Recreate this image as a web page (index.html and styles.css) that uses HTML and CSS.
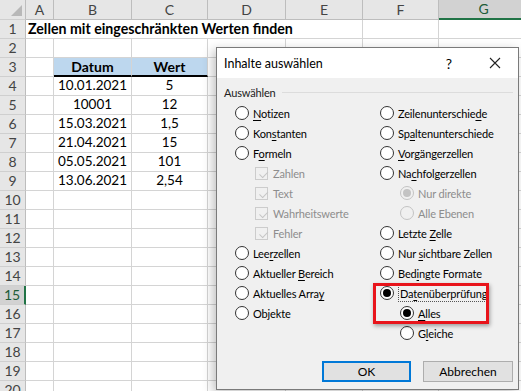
FILE: index.html
```html
<!DOCTYPE html>
<html lang="de">
<head>
    <meta charset="UTF-8">
    <title>Inhalte auswählen</title>
    <link rel="stylesheet" href="styles.css">
</head>
<body>

    <div class="sheet">
        <div class="row head">
            <div class="cell rh corner"><span class="tri"></span></div>
            <div class="cell">A</div>
            <div class="cell">B</div>
            <div class="cell">C</div>
            <div class="cell">D</div>
            <div class="cell">E</div>
            <div class="cell">F</div>
            <div class="cell sel">G</div>
        </div>
        <div class="row">
            <div class="cell rh">1</div>
            <div class="cell title">Zellen mit eingeschränkten Werten finden</div>
            <div class="cell"></div>
            <div class="cell"></div>
        </div>
        <div class="row">
            <div class="cell rh">2</div>
            <div class="cell"></div><div class="cell"></div><div class="cell"></div><div class="cell"></div><div class="cell"></div><div class="cell"></div><div class="cell"></div>
        </div>
        <div class="row">
            <div class="cell rh">3</div>
            <div class="cell"></div>
            <div class="cell th">Datum</div>
            <div class="cell th">Wert</div>
            <div class="cell"></div><div class="cell"></div><div class="cell"></div><div class="cell"></div>
        </div>
        <div class="row">
            <div class="cell rh">4</div>
            <div class="cell"></div>
            <div class="cell val">10.01.2021</div>
            <div class="cell val">5</div>
            <div class="cell"></div><div class="cell"></div><div class="cell"></div><div class="cell"></div>
        </div>
        <div class="row">
            <div class="cell rh">5</div>
            <div class="cell"></div>
            <div class="cell val">10001</div>
            <div class="cell val">12</div>
            <div class="cell"></div><div class="cell"></div><div class="cell"></div><div class="cell"></div>
        </div>
        <div class="row">
            <div class="cell rh">6</div>
            <div class="cell"></div>
            <div class="cell val">15.03.2021</div>
            <div class="cell val">1,5</div>
            <div class="cell"></div><div class="cell"></div><div class="cell"></div><div class="cell"></div>
        </div>
        <div class="row">
            <div class="cell rh">7</div>
            <div class="cell"></div>
            <div class="cell val">21.04.2021</div>
            <div class="cell val">15</div>
            <div class="cell"></div><div class="cell"></div><div class="cell"></div><div class="cell"></div>
        </div>
        <div class="row">
            <div class="cell rh">8</div>
            <div class="cell"></div>
            <div class="cell val">05.05.2021</div>
            <div class="cell val">101</div>
            <div class="cell"></div><div class="cell"></div><div class="cell"></div><div class="cell"></div>
        </div>
        <div class="row">
            <div class="cell rh">9</div>
            <div class="cell"></div>
            <div class="cell val">13.06.2021</div>
            <div class="cell val">2,54</div>
            <div class="cell"></div><div class="cell"></div><div class="cell"></div><div class="cell"></div>
        </div>
        <div class="row"><div class="cell rh">10</div><div class="cell"></div><div class="cell"></div><div class="cell"></div><div class="cell"></div><div class="cell"></div><div class="cell"></div><div class="cell"></div></div>
        <div class="row"><div class="cell rh">11</div><div class="cell"></div><div class="cell"></div><div class="cell"></div><div class="cell"></div><div class="cell"></div><div class="cell"></div><div class="cell"></div></div>
        <div class="row"><div class="cell rh">12</div><div class="cell"></div><div class="cell"></div><div class="cell"></div><div class="cell"></div><div class="cell"></div><div class="cell"></div><div class="cell"></div></div>
        <div class="row"><div class="cell rh">13</div><div class="cell"></div><div class="cell"></div><div class="cell"></div><div class="cell"></div><div class="cell"></div><div class="cell"></div><div class="cell"></div></div>
        <div class="row"><div class="cell rh">14</div><div class="cell"></div><div class="cell"></div><div class="cell"></div><div class="cell"></div><div class="cell"></div><div class="cell"></div><div class="cell"></div></div>
        <div class="row"><div class="cell rh sel">15</div><div class="cell"></div><div class="cell"></div><div class="cell"></div><div class="cell"></div><div class="cell"></div><div class="cell"></div><div class="cell"></div></div>
        <div class="row"><div class="cell rh">16</div><div class="cell"></div><div class="cell"></div><div class="cell"></div><div class="cell"></div><div class="cell"></div><div class="cell"></div><div class="cell"></div></div>
        <div class="row"><div class="cell rh">17</div><div class="cell"></div><div class="cell"></div><div class="cell"></div><div class="cell"></div><div class="cell"></div><div class="cell"></div><div class="cell"></div></div>
        <div class="row"><div class="cell rh">18</div><div class="cell"></div><div class="cell"></div><div class="cell"></div><div class="cell"></div><div class="cell"></div><div class="cell"></div><div class="cell"></div></div>
        <div class="row"><div class="cell rh">19</div><div class="cell"></div><div class="cell"></div><div class="cell"></div><div class="cell"></div><div class="cell"></div><div class="cell"></div><div class="cell"></div></div>
        <div class="row"><div class="cell rh">20</div><div class="cell"></div><div class="cell"></div><div class="cell"></div><div class="cell"></div><div class="cell"></div><div class="cell"></div><div class="cell"></div></div>

        <!-- Inhalte auswählen dialog -->
        <div class="dialog">
            <div class="dlg-title">
                <span class="dlg-name">Inhalte auswählen</span>
                <span class="dlg-help">?</span>
                <svg class="dlg-close" width="12" height="12" viewBox="0 0 12 12">
                    <path d="M1 1 L11 11 M11 1 L1 11" stroke="#222" stroke-width="1.1" fill="none"/>
                </svg>
            </div>
            <div class="dlg-body">
                <div class="group-label"><span>Auswählen</span></div>
                <div class="options">
                    <div class="col">
                        <div class="opt"><span class="radio"></span><span><u>N</u>otizen</span></div>
                        <div class="opt"><span class="radio"></span><span>Kon<u>s</u>tanten</span></div>
                        <div class="opt"><span class="radio"></span><span>F<u>o</u>rmeln</span></div>
                        <div class="opt sub off"><span class="check"></span><span>Zahlen</span></div>
                        <div class="opt sub off"><span class="check"></span><span>Text</span></div>
                        <div class="opt sub off"><span class="check"></span><span>Wahrheitswerte</span></div>
                        <div class="opt sub off"><span class="check"></span><span>Fehler</span></div>
                        <div class="opt"><span class="radio"></span><span>Lee<u>r</u>zellen</span></div>
                        <div class="opt"><span class="radio"></span><span>Aktueller <u>B</u>ereich</span></div>
                        <div class="opt"><span class="radio"></span><span>Aktuelles Arra<u>y</u></span></div>
                        <div class="opt"><span class="radio"></span><span>Objekte</span></div>
                    </div>
                    <div class="col">
                        <div class="opt"><span class="radio"></span><span>Zeilenunterschie<u>d</u>e</span></div>
                        <div class="opt"><span class="radio"></span><span>Sp<u>a</u>ltenunterschiede</span></div>
                        <div class="opt"><span class="radio"></span><span><u>V</u>orgängerzellen</span></div>
                        <div class="opt"><span class="radio"></span><span>Na<u>c</u>hfolgerzellen</span></div>
                        <div class="opt sub off"><span class="radio on"></span><span>Nur direkte</span></div>
                        <div class="opt sub off"><span class="radio"></span><span>Alle Ebenen</span></div>
                        <div class="opt"><span class="radio"></span><span>Letzte <u>Z</u>elle</span></div>
                        <div class="opt"><span class="radio"></span><span>Nur <u>s</u>ichtbare Zellen</span></div>
                        <div class="opt"><span class="radio"></span><span>Bed<u>i</u>ngte Formate</span></div>
                        <div class="opt"><span class="radio on"></span><span class="focus">Da<u>t</u>enüberprüfung</span></div>
                        <div class="opt sub"><span class="radio on"></span><span><u>A</u>lles</span></div>
                        <div class="opt sub"><span class="radio"></span><span>G<u>l</u>eiche</span></div>
                    </div>
                </div>
                <div class="buttons">
                    <button class="btn default">OK</button>
                    <button class="btn">Abbrechen</button>
                </div>
            </div>
            <div class="highlight"></div>
        </div>
    </div>

</body>
</html>
```

FILE: styles.css
```css
* {
    box-sizing: border-box;
    margin: 0;
    padding: 0;
}
body {
    background-color: #fff;
    overflow: hidden;
    font-family: 'Lato', 'Liberation Sans', sans-serif;
}
.sheet {
    position: relative;
    width: 521px;
    height: 391px;
    overflow: hidden;
}
.row {
    display: grid;
    grid-template-columns: 26px 28px 78px 76px 78px 77px 76px 90px;
    height: 19px;
}
.row.head {
    height: 20px;
}
.cell {
    border-right: 1px solid #d4d4d4;
    border-bottom: 1px solid #d4d4d4;
    font-size: 13.5px;
    color: #000;
    display: flex;
    align-items: center;
    justify-content: center;
    white-space: nowrap;
    line-height: 1;
}
.head .cell {
    background-color: #e6e6e6;
    border-right-color: #bdbdbd;
    border-bottom-color: #bdbdbd;
    color: #444;
    font-size: 14px;
}
.head .cell.sel {
    background-color: #d2d2d2;
    border-bottom: 2px solid #217346;
    color: #1e5c38;
}
.cell.rh {
    background-color: #e6e6e6;
    border-right-color: #bdbdbd;
    border-bottom-color: #cfcfcf;
    color: #444;
    font-size: 14px;
}
.cell.rh.sel {
    background-color: #d2d2d2;
    border-right: 2px solid #217346;
    color: #1e5c38;
}
.corner {
    position: relative;
}
.tri {
    position: absolute;
    right: 3px;
    bottom: 3px;
    width: 0;
    height: 0;
    border-left: 11px solid transparent;
    border-bottom: 11px solid #b8b8b8;
}
.cell.title {
    grid-column: 2 / 7;
    justify-content: flex-start;
    padding-left: 2px;
    font-weight: bold;
    font-size: 14.2px;
}
.cell.th {
    background-color: #bdd7ee;
    border-bottom: 2px solid #000;
    font-weight: bold;
    font-size: 14px;
    padding-top: 1px;
}

/* dialog */
.dialog {
    position: absolute;
    left: 216px;
    top: 47px;
    width: 303px;
    height: 343px;
    background-color: #f0f0f0;
    border: 1px solid #7a7a7a;
    box-shadow: -3px 3px 10px rgba(0, 0, 0, 0.25);
    font-family: 'Lato', 'Noto Sans', sans-serif;
    font-size: 11px;
    letter-spacing: -0.15px;
    color: #000;
}
.dlg-title {
    height: 30px;
    background-color: #fff;
    display: flex;
    align-items: center;
    padding-left: 7px;
    font-size: 12.5px;
    letter-spacing: 0;
}
.dlg-name {
    flex: 1;
}
.dlg-help {
    margin-right: 37px;
    font-size: 14px;
}
.dlg-close {
    margin-right: 17px;
}
.dlg-body {
    padding: 4px 5px 8px 7px;
    height: 312px;
    display: flex;
    flex-direction: column;
}
.group-label {
    height: 21px;
    display: flex;
    align-items: center;
    color: #222;
}
.group-label::after {
    content: "";
    flex: 1;
    border-top: 1px solid #dcdcdc;
    margin-left: 6px;
}
.options {
    display: grid;
    grid-template-columns: 145px 1fr;
    padding-left: 11px;
}
.opt {
    height: 20px;
    display: flex;
    align-items: center;
    white-space: nowrap;
}
.opt.sub {
    padding-left: 20px;
}
.opt.off {
    color: #8d8d8d;
}
.opt u {
    text-decoration-thickness: 1px;
    text-underline-offset: 2px;
}
.radio {
    width: 14px;
    height: 14px;
    border: 1px solid #333;
    border-radius: 50%;
    background-color: #fff;
    margin-right: 4px;
    flex: none;
    display: flex;
    align-items: center;
    justify-content: center;
}
.radio.on::after {
    content: "";
    width: 8px;
    height: 8px;
    border-radius: 50%;
    background-color: #000;
}
.off .radio {
    border-color: #c3c3c3;
    background-color: #f0f0f0;
}
.off .radio.on::after {
    background-color: #c3c3c3;
}
.check {
    width: 13px;
    height: 13px;
    border: 1px solid #cccccc;
    margin-right: 5px;
    flex: none;
    position: relative;
}
.check::after {
    content: "";
    position: absolute;
    left: 3px;
    top: 1px;
    width: 7px;
    height: 4px;
    border-left: 1px solid #c6c6c6;
    border-bottom: 1px solid #c6c6c6;
    transform: rotate(-45deg) translate(-1px, 2px);
}
.focus {
    border: 1px dotted #555;
    padding: 0 1px;
    line-height: 15px;
    flex: none;
}
.buttons {
    margin-top: auto;
    display: flex;
    justify-content: flex-end;
    gap: 12px;
}
.btn {
    width: 90px;
    height: 21px;
    background-color: #e1e1e1;
    border: 1px solid #adadad;
    font-family: inherit;
    font-size: 12px;
    color: #000;
}
.btn.default {
    border: 2px solid #0078d7;
    width: 89px;
}
.highlight {
    position: absolute;
    left: 156px;
    top: 235px;
    width: 116px;
    height: 41px;
    border: 3px solid #e8141b;
    box-shadow: 1px 2px 4px rgba(0, 0, 0, 0.35);
}
```
